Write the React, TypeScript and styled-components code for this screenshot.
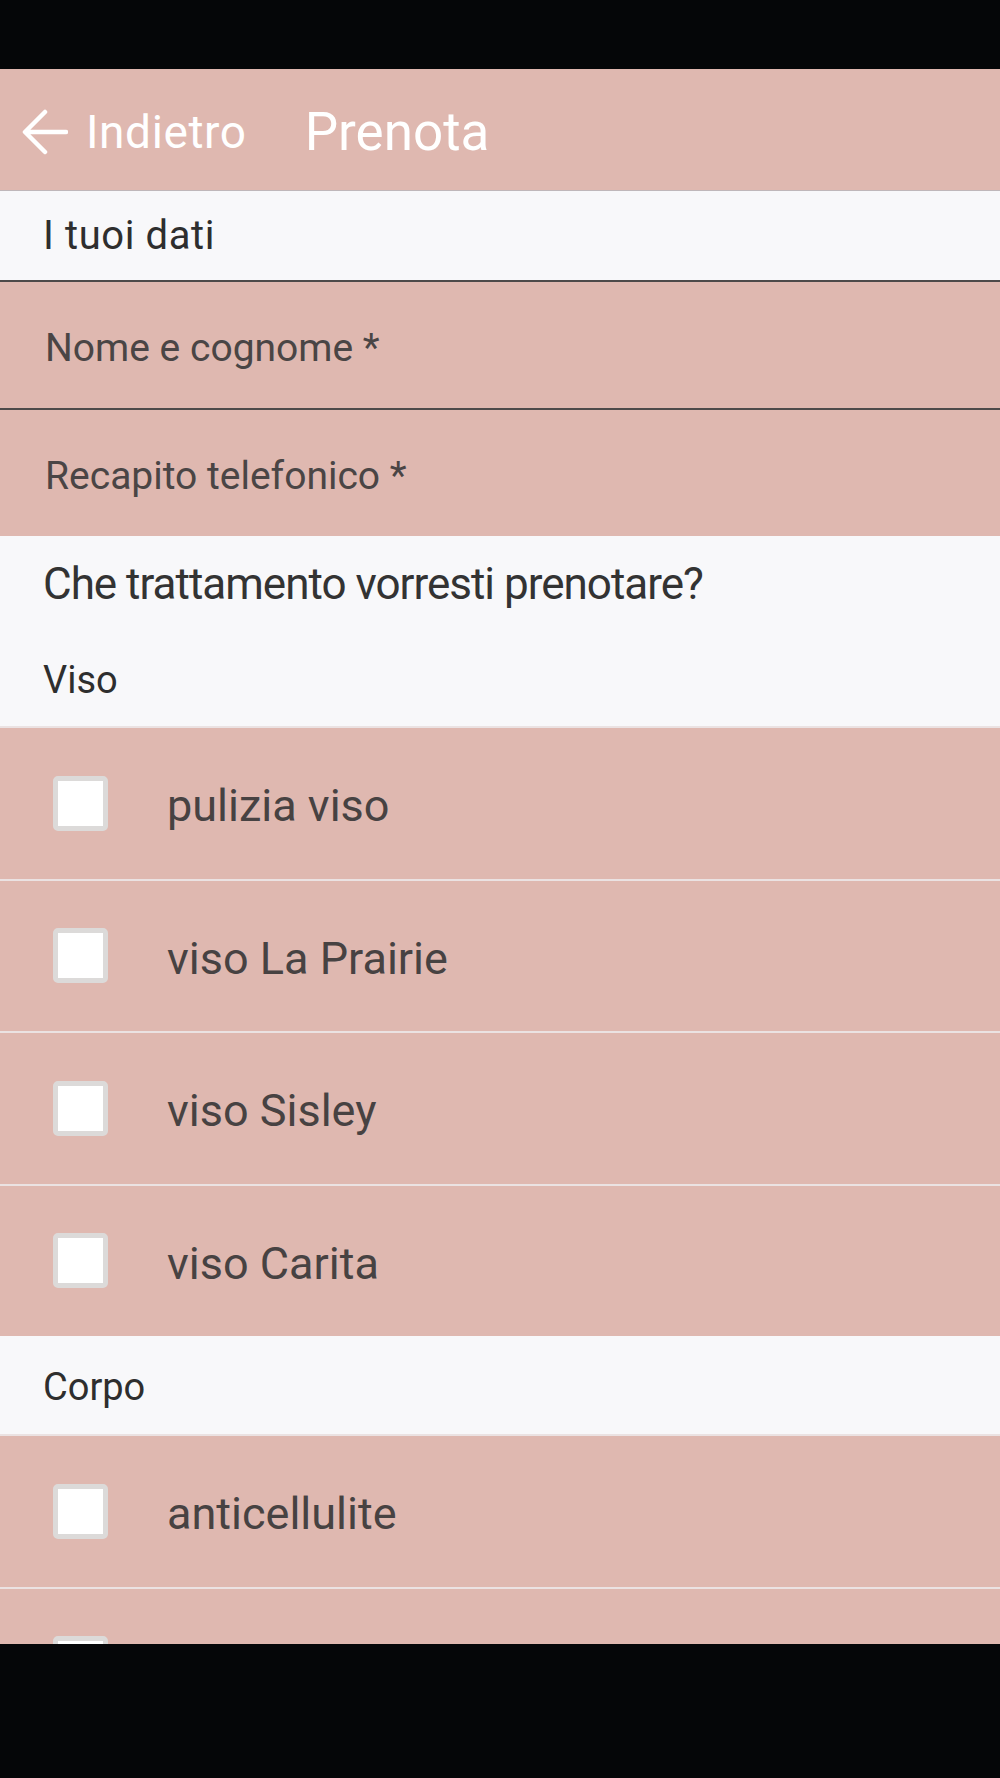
import React from "react";
import styled, { createGlobalStyle } from "styled-components";

const GlobalStyle = createGlobalStyle`
  html, body { margin: 0; padding: 0; background: #050608; }
  * { box-sizing: border-box; }
  body { font-family: Roboto, "Noto Sans", "Liberation Sans", sans-serif; }
`;

const Screen = styled.div`
  width: 1000px;
  height: 1778px;
  display: flex;
  flex-direction: column;
  background: #050608;
  overflow: hidden;
`;

const SystemBar = styled.div<{ $h: number }>`
  height: ${(p) => p.$h}px;
  flex: 0 0 auto;
  background: #050608;
`;

const Header = styled.header`
  height: 122px;
  flex: 0 0 auto;
  background: #dfb8b0;
  border-bottom: 1px solid #bfb7ba;
  display: flex;
  align-items: center;
  padding: 5px 0 0 22px;
  color: #ffffff;
`;

const BackButton = styled.button`
  display: flex;
  align-items: center;
  gap: 18px;
  background: none;
  border: none;
  padding: 0;
  color: #ffffff;
  font-family: Roboto, sans-serif;
  font-size: 46px;
  letter-spacing: 0.6px;
  cursor: pointer;
`;

const Title = styled.h1`
  margin: 0 0 0 58px;
  font-size: 53px;
  font-weight: 400;
  font-family: Roboto, sans-serif;
  color: #ffffff;
`;

const Content = styled.main`
  flex: 1 1 auto;
  overflow: hidden;
  background: #f8f8fa;
`;

const SectionTitle = styled.div`
  height: 89px;
  display: flex;
  align-items: center;
  padding-left: 43px;
  font-size: 40px;
  letter-spacing: 0.6px;
  color: #2e2e2e;
  background: #f8f8fa;
`;

const Field = styled.input`
  display: block;
  width: 100%;
  height: 128px;
  border: none;
  border-top: 2px solid #4d4a4a;
  border-radius: 0;
  background: #dfb8b0;
  padding: 6px 0 0 45px;
  font-family: Roboto, sans-serif;
  font-size: 39px;
  color: #474343;
  outline: none;
  &::placeholder { color: #4a4545; opacity: 1; }
`;

const QuestionBlock = styled.div`
  background: #f8f8fa;
  padding: 22px 0 23px 43px;
  display: flex;
  flex-direction: column;
  gap: 47px;
`;

const Question = styled.div`
  font-size: 44px;
  line-height: 52px;
  letter-spacing: -1px;
  color: #333333;
`;

const GroupLabel = styled.div`
  font-size: 38px;
  line-height: 46px;
  color: #2e2e2e;
`;

const GroupHeader = styled.div`
  height: 98px;
  display: flex;
  align-items: center;
  padding: 3px 0 0 43px;
  font-size: 38px;
  color: #2e2e2e;
  background: #f8f8fa;
`;

const Row = styled.label`
  height: 152.5px;
  display: flex;
  align-items: center;
  gap: 59px;
  padding-left: 53px;
  background: #dfb8b0;
  border-top: 2px solid #ebe2e2;
  cursor: pointer;
`;

const Box = styled.span`
  width: 55px;
  height: 55px;
  flex: 0 0 auto;
  background: #ffffff;
  border: 5px solid #dcdad9;
  border-radius: 5px;
`;

const RowText = styled.span`
  padding-top: 5px;
  font-size: 45px;
  color: #474242;
`;

const ArrowIcon = () => (
  <svg width="46" height="46" viewBox="0 0 46 46" fill="none">
    <path d="M44 23H4M23 3L3 23l20 20" stroke="#ffffff" strokeWidth="4.5" strokeLinecap="round" strokeLinejoin="round" />
  </svg>
);

const viso = ["pulizia viso", "viso La Prairie", "viso Sisley", "viso Carita"];
const corpo = ["anticellulite", ""];

export default function App() {
  return (
    <>
      <GlobalStyle />
      <Screen>
        <SystemBar $h={69} />
        <Header>
          <BackButton>
            <ArrowIcon />
            Indietro
          </BackButton>
          <Title>Prenota</Title>
        </Header>
        <Content>
          <SectionTitle>I tuoi dati</SectionTitle>
          <Field placeholder="Nome e cognome *" />
          <Field placeholder="Recapito telefonico *" />
          <QuestionBlock>
            <Question>Che trattamento vorresti prenotare?</Question>
            <GroupLabel>Viso</GroupLabel>
          </QuestionBlock>
          {viso.map((t) => (
            <Row key={t}>
              <Box />
              <RowText>{t}</RowText>
            </Row>
          ))}
          <GroupHeader>Corpo</GroupHeader>
          {corpo.map((t, i) => (
            <Row key={i}>
              <Box />
              {t && <RowText>{t}</RowText>}
            </Row>
          ))}
        </Content>
        <SystemBar $h={134} />
      </Screen>
    </>
  );
}
